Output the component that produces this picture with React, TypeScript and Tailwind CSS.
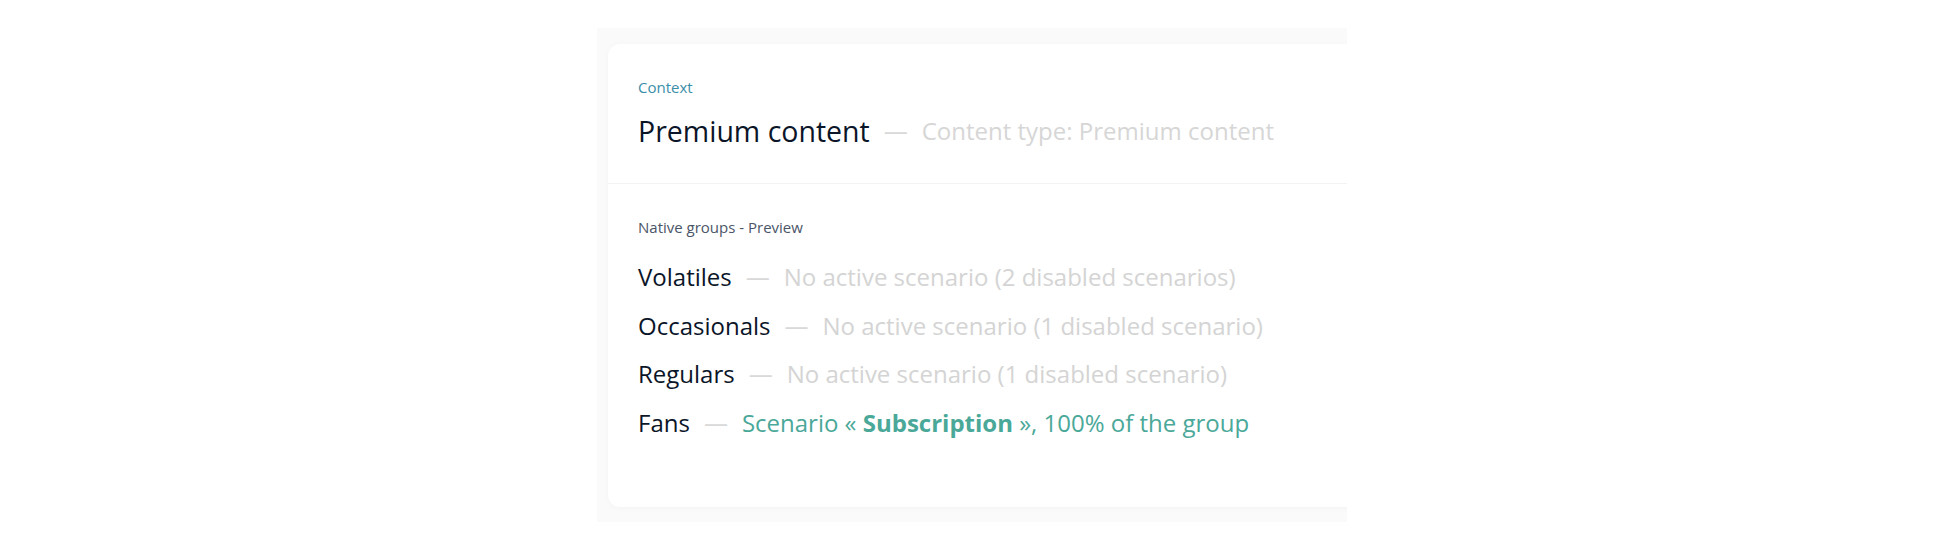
const groups = [
  { name: 'Volatiles', text: 'No active scenario (2 disabled scenarios)' },
  { name: 'Occasionals', text: 'No active scenario (1 disabled scenario)' },
  { name: 'Regulars', text: 'No active scenario (1 disabled scenario)' },
];

function Dash() {
  return <span className="mx-[14px] text-[24px] text-[#d9d9d9]">—</span>;
}

export default function App() {
  return (
    <div className="min-h-[554px] bg-white pt-[28px] font-['Open_Sans',sans-serif]">
      <div className="mx-auto h-[494px] w-[750px] overflow-hidden bg-[#fafafa] pl-[11px] pt-[16px]">
        <div className="h-[463px] w-[900px] rounded-[12px] bg-white shadow-[0_1px_6px_rgba(0,0,0,0.03)]">
          {/* Context */}
          <div className="px-[30px] pb-[34px] pt-[33px]">
            <div className="text-[15px] leading-[20px] text-[#3b8ea8]">Context</div>
            <div className="mt-[16px] flex items-center leading-[36px]">
              <span className="text-[28.5px] text-[#0b1528]">Premium content</span>
              <Dash />
              <span className="text-[24px] text-[#d6d6d6]">Content type: Premium content</span>
            </div>
          </div>

          <div className="h-px bg-[#f3f3f3]" />

          {/* Native groups */}
          <div className="px-[30px] pt-[33px]">
            <div className="text-[15px] leading-[20px] text-[#4a5568]">Native groups - Preview</div>
            <div className="mt-[24px] flex flex-col gap-[16.5px]">
              {groups.map((g) => (
                <div key={g.name} className="flex items-center text-[24px] leading-[32px]">
                  <span className="text-[#0b1528]">{g.name}</span>
                  <Dash />
                  <span className="text-[#d4d4d4]">{g.text}</span>
                </div>
              ))}
              <div className="flex items-center text-[24px] leading-[32px]">
                <span className="text-[#0b1528]">Fans</span>
                <Dash />
                <span className="text-[#4aa899]">
                  Scenario « <b className="font-bold">Subscription</b> », 100% of the group
                </span>
              </div>
            </div>
          </div>
        </div>
      </div>
    </div>
  );
}
